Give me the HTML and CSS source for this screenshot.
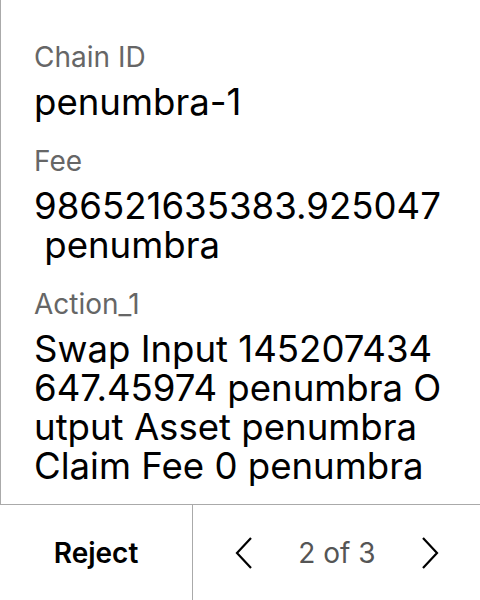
FILE: index.html
```html
<!DOCTYPE html>
<html>
<head>
<meta charset="utf-8">
<link rel="stylesheet" href="styles.css">
</head>
<body>
<div class="screen">
  <div class="content">
    <div class="field">
      <div class="label">Chain ID</div>
      <div class="value">penumbra-1</div>
    </div>
    <div class="field">
      <div class="label">Fee</div>
      <div class="value">986521635383.925047<br>&nbsp;penumbra</div>
    </div>
    <div class="field">
      <div class="label">Action_1</div>
      <div class="value">Swap Input 145207434<br>647.45974 penumbra O<br>utput Asset penumbra<br>Claim Fee 0 penumbra</div>
    </div>
  </div>
  <div class="footer">
    <div class="reject">Reject</div>
    <div class="pager">
      <svg class="chev" width="20" height="34" viewBox="0 0 20 34"><path d="M17 2 L3 17 L17 32" fill="none" stroke="#000" stroke-width="2.2"/></svg>
      <span class="count">2 of 3</span>
      <svg class="chev" width="20" height="34" viewBox="0 0 20 34"><path d="M3 2 L17 17 L3 32" fill="none" stroke="#000" stroke-width="2.2"/></svg>
    </div>
  </div>
</div>
</body>
</html>
```
FILE: styles.css
```css
html, body {
  margin: 0;
  padding: 0;
  background: #fff;
}
body {
  font-family: Inter, "Noto Sans", sans-serif;
  color: #000;
}
.screen {
  width: 480px;
  height: 600px;
  display: flex;
  flex-direction: column;
}
.content {
  height: 504px;
  box-sizing: border-box;
  border-left: 1px solid #aaa;
  padding: 40px 0 0 33px;
  display: flex;
  flex-direction: column;
  gap: 22px;
}
.label {
  font-size: 28px;
  line-height: 34px;
  color: #666;
}
.value {
  font-size: 36.6px;
  line-height: 39px;
  margin-top: 9px;
}
.footer {
  flex: 1;
  display: flex;
  border-top: 1px solid #aaa;
}
.reject {
  width: 192px;
  border-right: 1px solid #aaa;
  display: flex;
  align-items: center;
  justify-content: center;
  font-size: 28px;
  font-weight: 600;
}
.pager {
  flex: 1;
  display: flex;
  align-items: center;
  justify-content: space-between;
  padding: 0 40px 0 41px;
}
.count {
  font-size: 28px;
  color: #555;
}
```
